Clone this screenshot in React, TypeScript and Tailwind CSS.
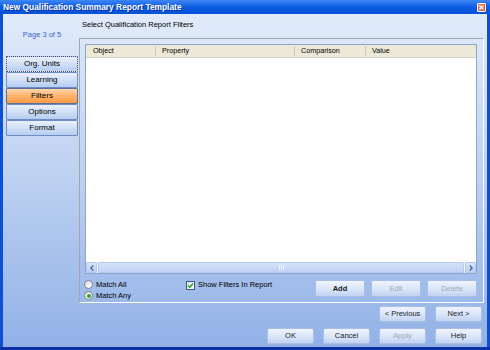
import React from "react";

function NavBtn({ label, active, focus }: { label: string; active?: boolean; focus?: boolean }) {
  const base =
    "h-[16px] w-[72px] flex items-center justify-center text-[8px] leading-none rounded-[1px] border";
  const cls = active
    ? "bg-gradient-to-b from-[#ffd6ae] via-[#ffb36c] to-[#ff9a44] border-[#5a6f9c]"
    : focus
    ? "bg-gradient-to-b from-[#eaf1fd] to-[#b7cdf1] border-dotted border-[#3e4e6e]"
    : "bg-gradient-to-b from-[#eaf1fd] to-[#b7cdf1] border-[#6d8cc6]";
  return <div className={`${base} ${cls}`}>{label}</div>;
}

function Btn({ label, disabled, bold, w }: { label: string; disabled?: boolean; bold?: boolean; w: string }) {
  return (
    <div
      className={`${w} flex items-center justify-center text-[7.5px] leading-none rounded-[2px] border border-[#a9bfe6] bg-gradient-to-b from-[#eef4fe] via-[#dce7fa] to-[#c2d3f1] ${
        disabled ? "text-[#a3a9b8]" : "text-[#1a1a1a]"
      } ${bold ? "font-bold" : ""}`}
    >
      {label}
    </div>
  );
}

function Radio({ checked, label }: { checked?: boolean; label: string }) {
  return (
    <div className="h-[11px] flex items-center gap-[3px]">
      <span className="w-[9px] h-[9px] rounded-full border border-[#7c8698] bg-gradient-to-br from-[#dedfd8] to-white flex items-center justify-center">
        {checked && <span className="w-[4px] h-[4px] rounded-full bg-[#2aa62a]" />}
      </span>
      <span className="text-[7.5px] leading-none">{label}</span>
    </div>
  );
}

export default function App() {
  return (
    <div className="w-[490px] h-[350px] flex flex-col bg-[#0c50d6] font-['Liberation_Sans',Arial,sans-serif] text-black overflow-hidden select-none">
      {/* title bar */}
      <div className="h-[14px] shrink-0 flex items-center pl-[3px] pr-[4px] bg-gradient-to-b from-[#3d86f5] via-[#0b5ce2] to-[#0552d8]">
        <span className="text-white font-bold text-[8.4px] leading-none [text-shadow:1px_1px_0_#0a2d8c]">
          New Qualification Summary Report Template
        </span>
        <div className="ml-auto w-[9px] h-[9px] rounded-[1px] border border-white bg-gradient-to-br from-[#f08a6a] to-[#d24a22] flex items-center justify-center">
          <svg width="5" height="5" viewBox="0 0 5 5">
            <path d="M0.5 0.5 L4.5 4.5 M4.5 0.5 L0.5 4.5" stroke="white" strokeWidth="1.2" />
          </svg>
        </div>
      </div>

      {/* content */}
      <div className="flex-1 flex flex-col mx-[3px] bg-gradient-to-b from-[#e1ebf9] via-[#bcd0f1] to-[#91b1e6]">
        <div className="flex">
          {/* left column */}
          <div className="w-[76px] shrink-0 flex flex-col pt-[16px] pl-[3px] pr-[1px]">
            <div className="text-center text-[7.5px] leading-[9px] text-[#3a66c6]">Page 3 of 5</div>
            <div className="mt-[17px] flex flex-col">
              <NavBtn label="Org. Units" focus />
              <NavBtn label="Learning" />
              <NavBtn label="Filters" active />
              <NavBtn label="Options" />
              <NavBtn label="Format" />
            </div>
          </div>

          {/* right column */}
          <div className="flex-1 flex flex-col pr-[3px]">
            <div className="h-[24px] pt-[6px] pl-[3px] text-[7.5px] leading-[9px]">
              Select Qualification Report Filters
            </div>
            <div className="h-[265px] flex flex-col border-t border-l border-t-[#a3a7ad] border-l-[#a3a7ad] border-r border-b border-r-white border-b-white pl-[5px] pr-[6px] pt-[5px]">
              {/* list */}
              <div className="h-[230px] flex flex-col border border-[#8ea4c8] bg-white">
                <div className="h-[13px] flex items-stretch bg-[#ece9d8] border-b border-[#d5d2c4] text-[7.2px] leading-none">
                  <div className="w-[70px] flex items-center pl-[7px] border-r border-[#cdc9b8] my-[1px]">Object</div>
                  <div className="w-[139px] flex items-center pl-[6px] border-r border-[#cdc9b8] my-[1px]">Property</div>
                  <div className="w-[71px] flex items-center pl-[6px] border-r border-[#cdc9b8] my-[1px]">Comparison</div>
                  <div className="flex-1 flex items-center pl-[6px]">Value</div>
                </div>
                <div className="flex-1" />
                {/* scrollbar */}
                <div className="h-[11px] flex bg-[#eef2fb]">
                  <div className="w-[11px] h-[11px] flex items-center justify-center rounded-[1px] border border-[#b4c7ec] bg-gradient-to-b from-[#d8e4fb] to-[#bccff3]">
                    <svg width="4" height="6" viewBox="0 0 4 6">
                      <path d="M3.3 0.5 L0.8 3 L3.3 5.5" stroke="#4d6185" strokeWidth="1.2" fill="none" />
                    </svg>
                  </div>
                  <div className="flex-1 mx-[1px] flex items-center justify-center rounded-[1px] border border-[#b6c9ee] bg-gradient-to-b from-[#d6e2fa] to-[#c1d2f3]">
                    <div className="flex gap-[1px]">
                      <span className="w-[1px] h-[5px] bg-[#eef3fd]" />
                      <span className="w-[1px] h-[5px] bg-[#eef3fd]" />
                      <span className="w-[1px] h-[5px] bg-[#eef3fd]" />
                    </div>
                  </div>
                  <div className="w-[11px] h-[11px] flex items-center justify-center rounded-[1px] border border-[#b4c7ec] bg-gradient-to-b from-[#d8e4fb] to-[#bccff3]">
                    <svg width="4" height="6" viewBox="0 0 4 6">
                      <path d="M0.7 0.5 L3.2 3 L0.7 5.5" stroke="#4d6185" strokeWidth="1.2" fill="none" />
                    </svg>
                  </div>
                </div>
              </div>

              {/* options row */}
              <div className="flex pt-[5px]">
                <div className="w-[102px] -ml-[1px] flex flex-col">
                  <Radio label="Match All" />
                  <Radio label="Match Any" checked />
                </div>
                <div className="h-[11px] flex items-center gap-[3px] pt-[1px]">
                  <span className="w-[9px] h-[9px] border border-[#3d5a86] bg-gradient-to-br from-[#e2e2dc] to-white flex items-center justify-center">
                    <svg width="7" height="7" viewBox="0 0 7 7">
                      <path d="M1 3.5 L2.8 5.3 L6 1.5" stroke="#22a022" strokeWidth="1.4" fill="none" />
                    </svg>
                  </span>
                  <span className="text-[7.5px] leading-none">Show Filters In Report</span>
                </div>
                <div className="ml-auto flex gap-[6px] h-[17px] mt-[1px]">
                  <Btn label="Add" bold w="w-[50px]" />
                  <Btn label="Edit" disabled w="w-[50px]" />
                  <Btn label="Delete" disabled w="w-[50px]" />
                </div>
              </div>
            </div>
          </div>
        </div>

        {/* bottom buttons */}
        <div className="flex flex-col items-end pr-[5px] pt-[3px] gap-[6px]">
          <div className="flex gap-[9px] h-[16px]">
            <Btn label="< Previous" w="w-[47px]" />
            <Btn label="Next >" w="w-[47px]" />
          </div>
          <div className="flex gap-[9px] h-[16px]">
            <Btn label="OK" w="w-[47px]" />
            <Btn label="Cancel" w="w-[47px]" />
            <Btn label="Apply" disabled w="w-[47px]" />
            <Btn label="Help" w="w-[47px]" />
          </div>
        </div>
      </div>
      <div className="h-[3px] shrink-0 bg-[#0a2fa6]" />
    </div>
  );
}
